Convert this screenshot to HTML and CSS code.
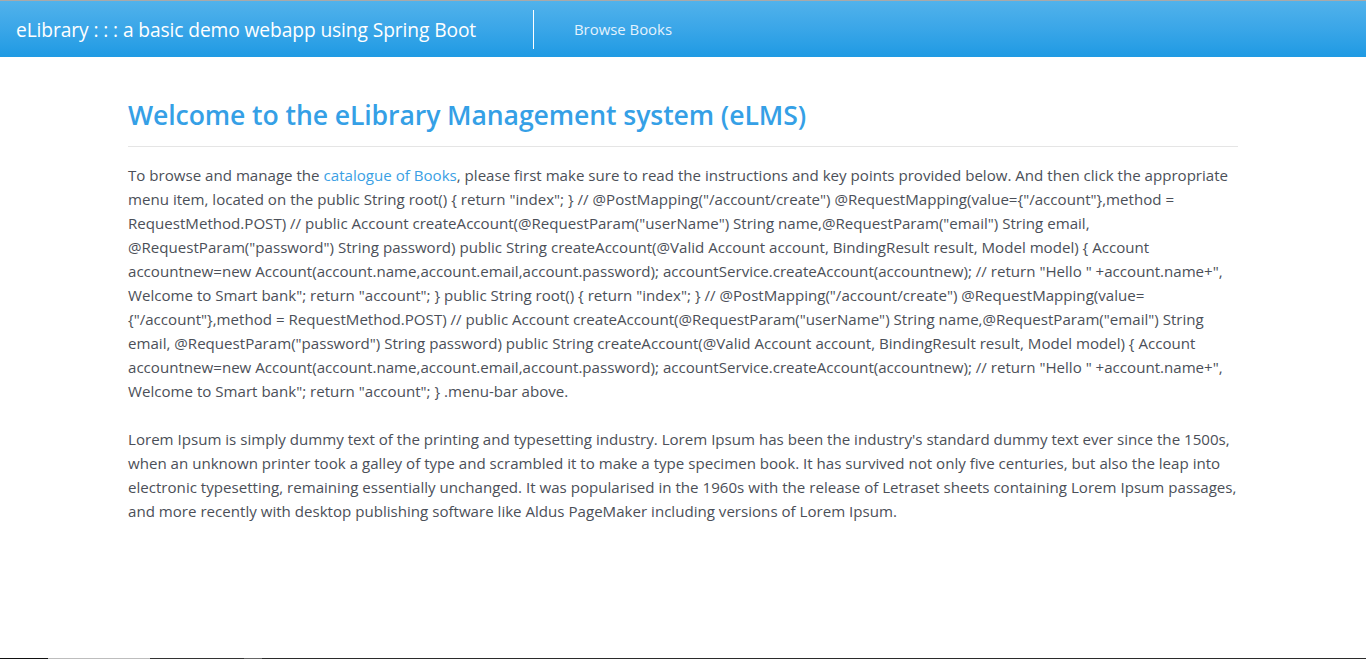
FILE: index.html
```html
<!DOCTYPE html>
<html lang="en">
<head>
<meta charset="utf-8">
<title>eLibrary</title>
<link rel="stylesheet" href="styles.css">
</head>
<body>
<header class="topbar">
  <div class="brand">eLibrary : : : a basic demo webapp using Spring Boot</div>
  <div class="divider"></div>
  <nav class="nav"><a class="nav-link" href="#">Browse Books</a></nav>
</header>
<main class="container">
  <h1 class="title">Welcome to the eLibrary Management system (eLMS)</h1>
  <p class="text">To browse and manage the <a class="link" href="#">catalogue of Books</a>, please first make sure to read the instructions and key points provided below. And then click the appropriate menu item, located on the public String root() { return "index"; } // @PostMapping("/account/create") @RequestMapping(value={"/account"},method = RequestMethod.POST) // public Account createAccount(@RequestParam("userName") String name,@RequestParam("email") String email, @RequestParam("password") String password) public String createAccount(@Valid Account account, BindingResult result, Model model) { Account accountnew=new Account(account.name,account.email,account.password); accountService.createAccount(accountnew); // return "Hello " +account.name+", Welcome to Smart bank"; return "account"; } public String root() { return "index"; } // @PostMapping("/account/create") @RequestMapping(value={"/account"},method = RequestMethod.POST) // public Account createAccount(@RequestParam("userName") String name,@RequestParam("email") String email, @RequestParam("password") String password) public String createAccount(@Valid Account account, BindingResult result, Model model) { Account accountnew=new Account(account.name,account.email,account.password); accountService.createAccount(accountnew); // return "Hello " +account.name+", Welcome to Smart bank"; return "account"; } .menu-bar above.</p>
  <p class="text">Lorem Ipsum is simply dummy text of the printing and typesetting industry. Lorem Ipsum has been the industry's standard dummy text ever since the 1500s, when an unknown printer took a galley of type and scrambled it to make a type specimen book. It has survived not only five centuries, but also the leap into electronic typesetting, remaining essentially unchanged. It was popularised in the 1960s with the release of Letraset sheets containing Lorem Ipsum passages, and more recently with desktop publishing software like Aldus PageMaker including versions of Lorem Ipsum.</p>
</main>
<div class="edge">
  <span class="seg s1"></span><span class="seg s2"></span><span class="seg s3"></span><span class="seg s4"></span><span class="seg s5"></span>
</div>
</body>
</html>
```
FILE: styles.css
```css
html, body {
  margin: 0;
  padding: 0;
  background: #ffffff;
}
body {
  font-family: "Open Sans", "Noto Sans", "Liberation Sans", sans-serif;
  color: #4b4f58;
  height: 659px;
  overflow: hidden;
}
.topbar {
  height: 57px;
  box-sizing: border-box;
  border-top: 1px solid #a9a9a9;
  background: linear-gradient(to bottom, #51b2eb 0%, #3aa6e8 50%, #1f9ae3 100%);
  display: flex;
  align-items: center;
}
.brand {
  color: #ffffff;
  font-size: 19.2px;
  padding-left: 16px;
  width: 533px;
  box-sizing: border-box;
  white-space: nowrap;
  letter-spacing: -0.1px;
}
.divider {
  width: 1px;
  height: 39px;
  background: #ffffff;
  margin-top: 1px;
}
.nav {
  padding-left: 40px;
}
.nav-link {
  color: #e3f2fd;
  font-size: 14.9px;
  text-decoration: none;
}
.container {
  width: 1110px;
  margin: 0 auto;
  padding-top: 40px;
}
.title {
  margin: 0;
  font-weight: 600;
  font-size: 26.6px;
  line-height: 36px;
  color: #35a0e6;
  padding-bottom: 13px;
  border-bottom: 1px solid #e5e5e5;
  letter-spacing: -0.1px;
}
.text {
  font-size: 15.1px;
  line-height: 24px;
  margin: 16px 0 24px;
}
.text + .text {
  margin-top: 0;
}
.link {
  color: #3a9fe4;
  text-decoration: none;
}
.edge {
  position: fixed;
  left: 0;
  right: 0;
  bottom: 0;
  height: 1px;
  display: flex;
}
.seg { height: 1px; }
.s1 { width: 48px; background: #111; }
.s2 { width: 102px; background: #bdbdbd; }
.s3 { width: 94px; background: #333; }
.s4 { width: 18px; background: #666; }
.s5 { flex: 1; background: #2b2b2b; }
```
